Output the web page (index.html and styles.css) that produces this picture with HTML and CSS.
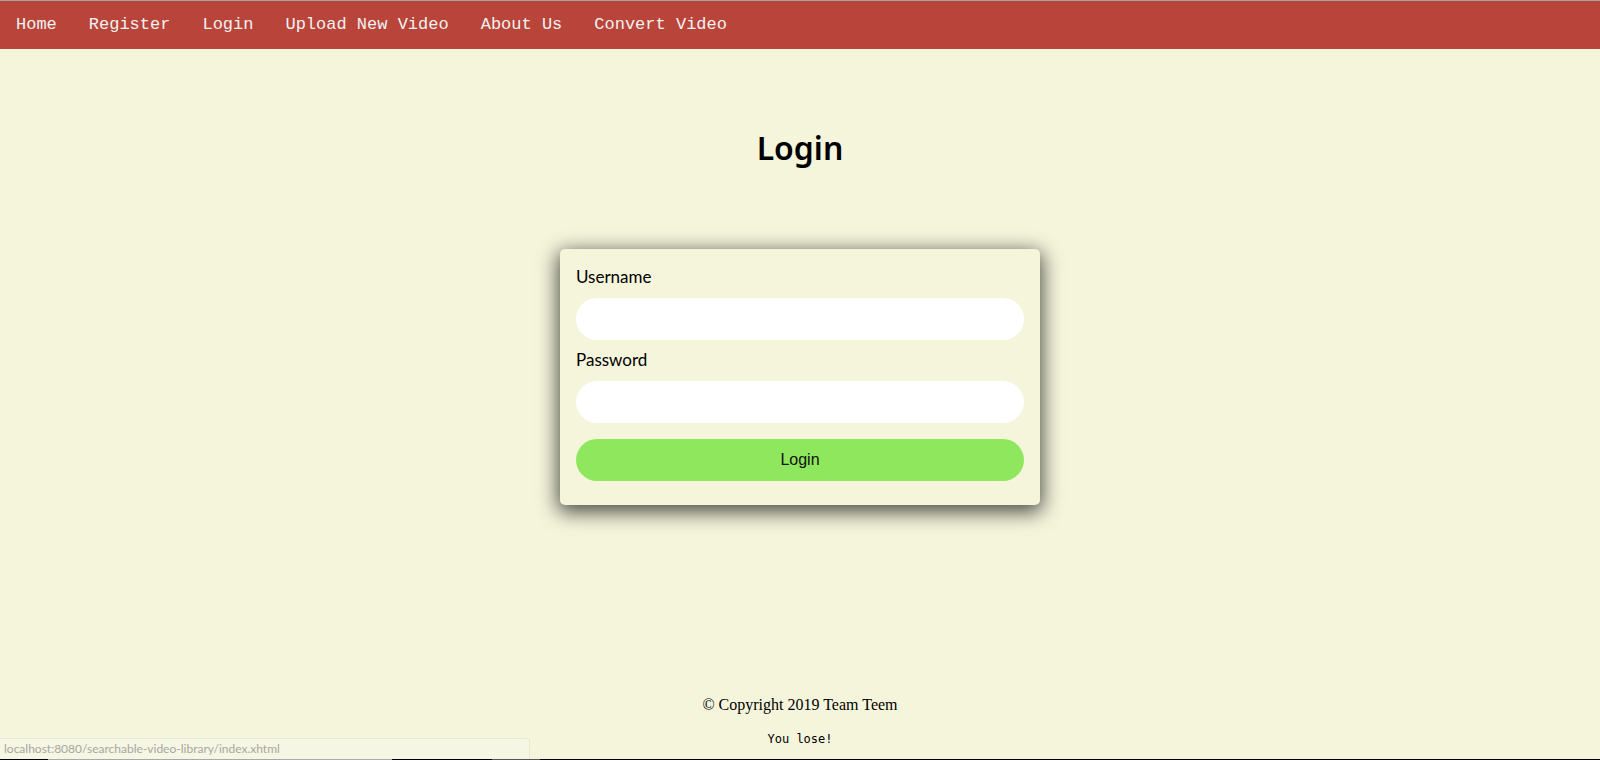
FILE: index.html
```html
<!DOCTYPE html>
<html lang="en">
<head>
<meta charset="utf-8">
<title>Login</title>
<link rel="stylesheet" href="styles.css">
</head>
<body>
<div class="chrome-top"></div>
<nav class="topnav">
  <a href="#">Home</a>
  <a href="#">Register</a>
  <a href="#">Login</a>
  <a href="#">Upload New Video</a>
  <a href="#">About Us</a>
  <a href="#">Convert Video</a>
</nav>
<main class="main">
  <h1 class="title">Login</h1>
  <form class="card">
    <label class="label" for="username">Username</label>
    <input class="field" id="username" type="text">
    <label class="label" for="password">Password</label>
    <input class="field" id="password" type="password">
    <button class="btn" type="button">Login</button>
  </form>
</main>
<footer class="footer">
  <p class="copy">&copy; Copyright 2019 Team Teem</p>
  <p class="lose">You lose!</p>
</footer>
<div class="taskbar">
  <span class="seg seg-a"></span>
  <span class="seg seg-b"></span>
  <span class="seg seg-c"></span>
  <span class="seg seg-d"></span>
  <span class="seg seg-e"></span>
</div>
<div class="status">localhost:8080/searchable-video-library/index.xhtml</div>
</body>
</html>
```

FILE: styles.css
```css
html, body {
  margin: 0;
  padding: 0;
}
body {
  background: #f5f5dc;
  height: 760px;
  display: flex;
  flex-direction: column;
  overflow: hidden;
  font-family: "Lato", "DejaVu Sans", sans-serif;
  color: #000;
}
.chrome-top {
  height: 1px;
  background: #a3a3a3;
  flex: none;
}
.topnav {
  background: #b9443a;
  display: flex;
  flex: none;
}
.topnav a {
  color: #f2f2f2;
  text-decoration: none;
  font-family: "Liberation Mono", "Courier New", monospace;
  font-size: 17px;
  line-height: 20px;
  padding: 14px 16px;
}
.main {
  flex: 1;
  display: flex;
  flex-direction: column;
  align-items: center;
}
.title {
  margin: 79px 0 0;
  font-family: "Noto Sans", "DejaVu Sans", sans-serif;
  font-weight: 600;
  font-size: 32px;
  line-height: 40px;
  text-align: center;
}
.card {
  margin-top: 81px;
  width: 480px;
  box-sizing: border-box;
  padding: 16px 16px 24px;
  background: #f5f5dc;
  border-radius: 5px;
  box-shadow: 0 5px 20px 2px rgba(0, 0, 0, 0.7);
  display: flex;
  flex-direction: column;
}
.label {
  font-size: 17px;
  line-height: 24px;
}
.field {
  margin: 9px 0 8px;
  height: 42px;
  border: none;
  border-radius: 21px;
  background: #fff;
  padding: 0 16px;
  outline: none;
  font-size: 16px;
}
.btn {
  margin-top: 8px;
  height: 42px;
  border: none;
  border-radius: 21px;
  background: #8ee75d;
  color: #111;
  font-family: "Liberation Sans", Arial, sans-serif;
  font-size: 16px;
  cursor: pointer;
}
.footer {
  flex: none;
  text-align: center;
  padding-bottom: 12px;
}
.copy {
  margin: 0;
  font-family: "Liberation Serif", "Times New Roman", serif;
  font-size: 16px;
  line-height: 20px;
}
.lose {
  margin: 16px 0 0;
  font-family: "DejaVu Sans Mono", monospace;
  font-size: 12px;
  line-height: 16px;
}
.taskbar {
  flex: none;
  height: 1px;
  display: flex;
  background: #000;
}
.seg { display: block; height: 1px; }
.seg-a { width: 48px; background: #000; }
.seg-b { width: 344px; background: #a9a9a9; }
.seg-c { width: 100px; background: #000; }
.seg-d { width: 48px; background: #555; }
.seg-e { flex: 1; background: #000; }
.status {
  position: fixed;
  left: 0;
  bottom: 1px;
  width: 530px;
  height: 21px;
  box-sizing: border-box;
  padding: 0 4px;
  background: #f6f6e4;
  border-top: 1px solid #e8e8d2;
  border-right: 1px solid #e8e8d2;
  border-top-right-radius: 3px;
  color: #a8a8a0;
  font-family: "Lato", "Open Sans", sans-serif;
  font-size: 12px;
  line-height: 20px;
  white-space: nowrap;
}
```
